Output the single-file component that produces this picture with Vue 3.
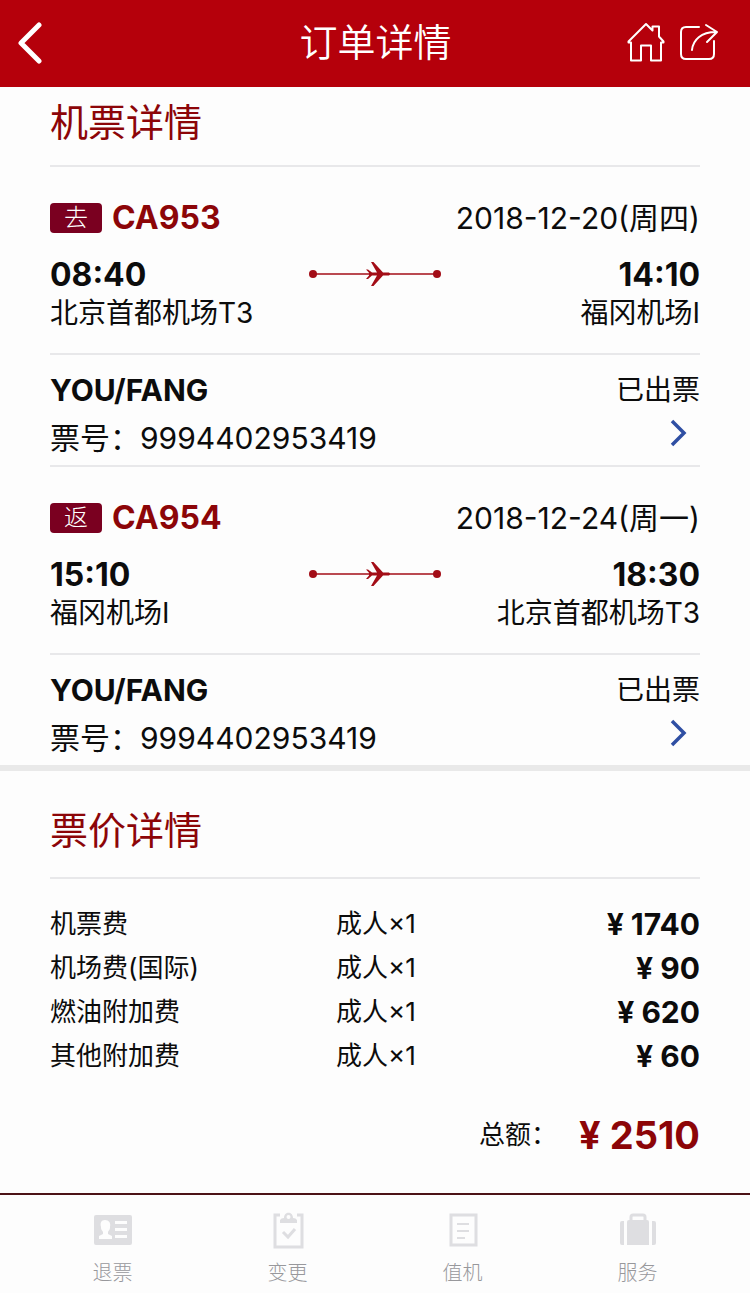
<template>
    <div class="page">
        <header class="header">
            <button class="icon-btn" aria-label="返回">
                <svg viewBox="0 0 30 44" width="30" height="44">
                    <path d="M23 5L5 23l18 18" stroke-width="5" stroke-linecap="round" stroke-linejoin="round"/>
                </svg>
            </button>
            <h1>订单详情</h1>
            <div class="header-actions">
                <button class="icon-btn" aria-label="首页">
                    <svg viewBox="0 0 38 40" width="38" height="40">
                        <path d="M4 20.5H1.500L1.500 19.500L19 2L25.500 8.500V4.500H32V14.500L36.500 19.500V20.500H34V38.500H24V23.500H14V38.500H4Z" stroke-width="2" stroke-linejoin="round"/>
                    </svg>
                </button>
                <button class="icon-btn" aria-label="分享">
                    <svg viewBox="0 0 40 40" width="40" height="40">
                        <path d="M20 5H7Q2 5 2 10V32Q2 37 7 37H30Q35 37 35 32V19M13 28C14 18 22 10 37 10M27 3L38 10L28 20" stroke-width="2" stroke-linecap="round" stroke-linejoin="round"/>
                    </svg>
                </button>
            </div>
        </header>

        <main>
            <section class="section">
                <h2>机票详情</h2>
                <article v-for="flight in flights" :key="flight.no" class="flight">
                    <div class="route">
                        <div class="row flight-head">
                            <div class="flight-no">
                                <span class="badge">{{ flight.tag }}</span>
                                <strong>{{ flight.no }}</strong>
                            </div>
                            <span class="date">{{ flight.date }}</span>
                        </div>
                        <div class="stops">
                            <div>
                                <strong>{{ flight.from.time }}</strong>
                                <span>{{ flight.from.airport }}</span>
                            </div>
                            <svg class="plane" viewBox="0 0 134 28" width="134" height="28">
                                <circle cx="5" cy="14" r="4"/>
                                <circle cx="129" cy="14" r="4"/>
                                <path d="M5 13.300H129V14.700H5Z"/>
                                <path d="M61 12.800L58 9.500H60L64 12.500H69L63 2H65.500L75 12.500H81Q83 14 81 15.500H75L65.500 26H63L69 15.500H64L60 19H58L61 15.500Z"/>
                            </svg>
                            <div class="arrival">
                                <strong>{{ flight.to.time }}</strong>
                                <span>{{ flight.to.airport }}</span>
                            </div>
                        </div>
                    </div>
                    <div class="passenger">
                        <div class="row">
                            <strong>{{ passenger.name }}</strong>
                            <span class="status">已出票</span>
                        </div>
                        <div class="row">
                            <span class="ticket">票号：{{ passenger.ticket }}</span>
                            <button class="more-btn" aria-label="查看客票">
                                <svg viewBox="0 0 18 28" width="18" height="28">
                                    <path d="M2 2L14 14L2 26" stroke-width="3.500"/>
                                </svg>
                            </button>
                        </div>
                    </div>
                </article>
            </section>

            <section class="section fare">
                <h2>票价详情</h2>
                <table>
                    <tbody>
                        <tr v-for="item in fees" :key="item.name">
                            <th scope="row">{{ item.name }}</th>
                            <td>成人×1</td>
                            <td class="price">¥ {{ item.price }}</td>
                        </tr>
                    </tbody>
                </table>
                <p class="total">
                    <span>总额：</span>
                    <strong>¥ {{ total }}</strong>
                </p>
            </section>
        </main>

        <nav class="tabbar">
            <button>
                <svg viewBox="0 0 40 40" width="40" height="40">
                    <path fill-rule="evenodd" d="M3 5H37Q39 5 39 7V33Q39 35 37 35H3Q1 35 1 33V7Q1 5 3 5ZM12 10C8 10 7 13 8 17C8 20 9 20 10 22V24L6 26V29H19V26L15 24V22C16 20 17 20 17 17C18 13 16 10 12 10ZM22 11V14H34V11ZM22 18V21H34V18ZM22 25V28H34V25Z"/>
                </svg>
                <span>退票</span>
            </button>
            <button>
                <svg viewBox="0 0 40 40" width="40" height="40">
                    <path class="line" d="M12 5H7V37H34V5H29M15 22L20 27L27 19"/>
                    <path fill-rule="evenodd" d="M12 13V10Q13 8 16 8C16 1 25 1 25 8Q28 8 29 10V13ZM20.500 5A2 2 0 1 0 20.500 9A2 2 0 1 0 20.500 5Z"/>
                </svg>
                <span>变更</span>
            </button>
            <button>
                <svg viewBox="0 0 40 40" width="40" height="40">
                    <path class="line" d="M8 5H33V35H8Z"/>
                    <path class="line thin" d="M14 14H26M14 21H26M14 28H22"/>
                </svg>
                <span>值机</span>
            </button>
            <button>
                <svg viewBox="0 0 40 40" width="40" height="40">
                    <path d="M11 10H29Q31 10 31 12V35H9V12Q9 10 11 10ZM4 11H6V35H4Q2 35 2 33V13Q2 11 4 11ZM34 11H36Q38 11 38 13V33Q38 35 36 35H34Z"/>
                    <path class="line" d="M13 12V7Q13 5 15 5H25Q27 5 27 7V12"/>
                </svg>
                <span>服务</span>
            </button>
        </nav>
    </div>
</template>

<script setup>
const passenger = { name: 'YOU/FANG', ticket: '9994402953419' }

const flights = [
    {
        tag: '去',
        no: 'CA953',
        date: '2018-12-20(周四)',
        from: { time: '08:40', airport: '北京首都机场T3' },
        to: { time: '14:10', airport: '福冈机场I' }
    },
    {
        tag: '返',
        no: 'CA954',
        date: '2018-12-24(周一)',
        from: { time: '15:10', airport: '福冈机场I' },
        to: { time: '18:30', airport: '北京首都机场T3' }
    }
]

const fees = [
    { name: '机票费', price: 1740 },
    { name: '机场费(国际)', price: 90 },
    { name: '燃油附加费', price: 620 },
    { name: '其他附加费', price: 60 }
]

const total = fees.reduce((sum, item) => sum + item.price, 0)
</script>

<style>
body {
    margin: 0;
    background: #fdfdfd;
}
</style>

<style scoped>
.page {
    color: #0c0c0c;
    font-family: Inter, "Noto Sans CJK SC", sans-serif;
    font-size: 28px;
    line-height: 38px;
}

button {
    padding: 0;
    border: none;
    background: none;
    font: inherit;
    cursor: pointer;
}

svg {
    display: block;
}

.header {
    display: grid;
    grid-template-columns: 1fr auto 1fr;
    align-items: center;
    box-sizing: border-box;
    height: 87px;
    padding: 0 31px 4px 16px;
    background: #b5000b;
}

.header h1 {
    margin: 0 0 0 16px;
    color: #fff;
    font-size: 38px;
    font-weight: 350;
}

.icon-btn svg {
    fill: none;
    stroke: #fff;
}

.header-actions {
    display: flex;
    justify-content: flex-end;
    gap: 14px;
}

.section {
    padding: 0 50px;
}

h2 {
    margin: 0;
    padding: 8px 0 16px;
    border-bottom: 2px solid #e8e8ea;
    color: #8c0508;
    font-size: 38px;
    font-weight: 400;
    line-height: 54px;
}

.row {
    display: flex;
    justify-content: space-between;
    align-items: center;
}

.flight + .flight {
    border-top: 2px solid #e8e8ea;
}

.route {
    padding: 32px 0 21px;
}

.flight-head {
    margin-bottom: 19px;
}

.flight-no {
    display: flex;
    align-items: center;
    gap: 10px;
    color: #8c0508;
}

strong {
    font-size: 30px;
    font-weight: 700;
}

.route strong {
    font-size: 32px;
}

.badge {
    width: 52px;
    border-radius: 4px;
    background: #7a0020;
    color: #fff;
    font-size: 24px;
    font-weight: 300;
    line-height: 30px;
    text-align: center;
}

.date,
.ticket {
    font-size: 30px;
}

.stops {
    display: grid;
    grid-template-columns: 1fr auto 1fr;
}

.stops strong,
.stops span {
    display: block;
}

.arrival {
    text-align: right;
}

.plane {
    margin-top: 4px;
    fill: #a30d17;
}

.passenger {
    display: grid;
    gap: 10px;
    padding: 16px 0 8px;
    border-top: 2px solid #e8e8ea;
}

.more-btn {
    padding: 0 12px 10px;
}

.more-btn svg {
    fill: none;
    stroke: #2f4fa3;
}

.fare {
    border-top: 6px solid #e9e9e9;
}

.fare h2 {
    padding: 32px 0 20px;
}

table {
    width: 100%;
    margin-top: 23px;
    border-collapse: collapse;
    table-layout: fixed;
    font-size: 26px;
    line-height: 44px;
}

th,
td {
    padding: 0;
    font-weight: 400;
    text-align: left;
}

th {
    width: 44%;
}

td.price {
    font-size: 30px;
    font-weight: 700;
    text-align: right;
}

.total {
    display: flex;
    justify-content: flex-end;
    align-items: center;
    gap: 22px;
    margin: 0;
    padding: 30px 0 31px;
    font-size: 26px;
    line-height: 54px;
}

.total strong {
    color: #8c0508;
    font-size: 38px;
}

.tabbar {
    display: grid;
    grid-template-columns: repeat(4, 1fr);
    padding: 15px 25px 4px;
    border-top: 2px solid #4c1216;
}

.tabbar button {
    display: flex;
    flex-direction: column;
    align-items: center;
    gap: 8px;
    color: #98989c;
    font-size: 20px;
    font-weight: 300;
    line-height: 30px;
}

.tabbar svg {
    fill: #dedee1;
}

.tabbar .line {
    fill: none;
    stroke: #dedee1;
    stroke-width: 3;
}

.tabbar .thin {
    stroke-width: 2;
}
</style>
